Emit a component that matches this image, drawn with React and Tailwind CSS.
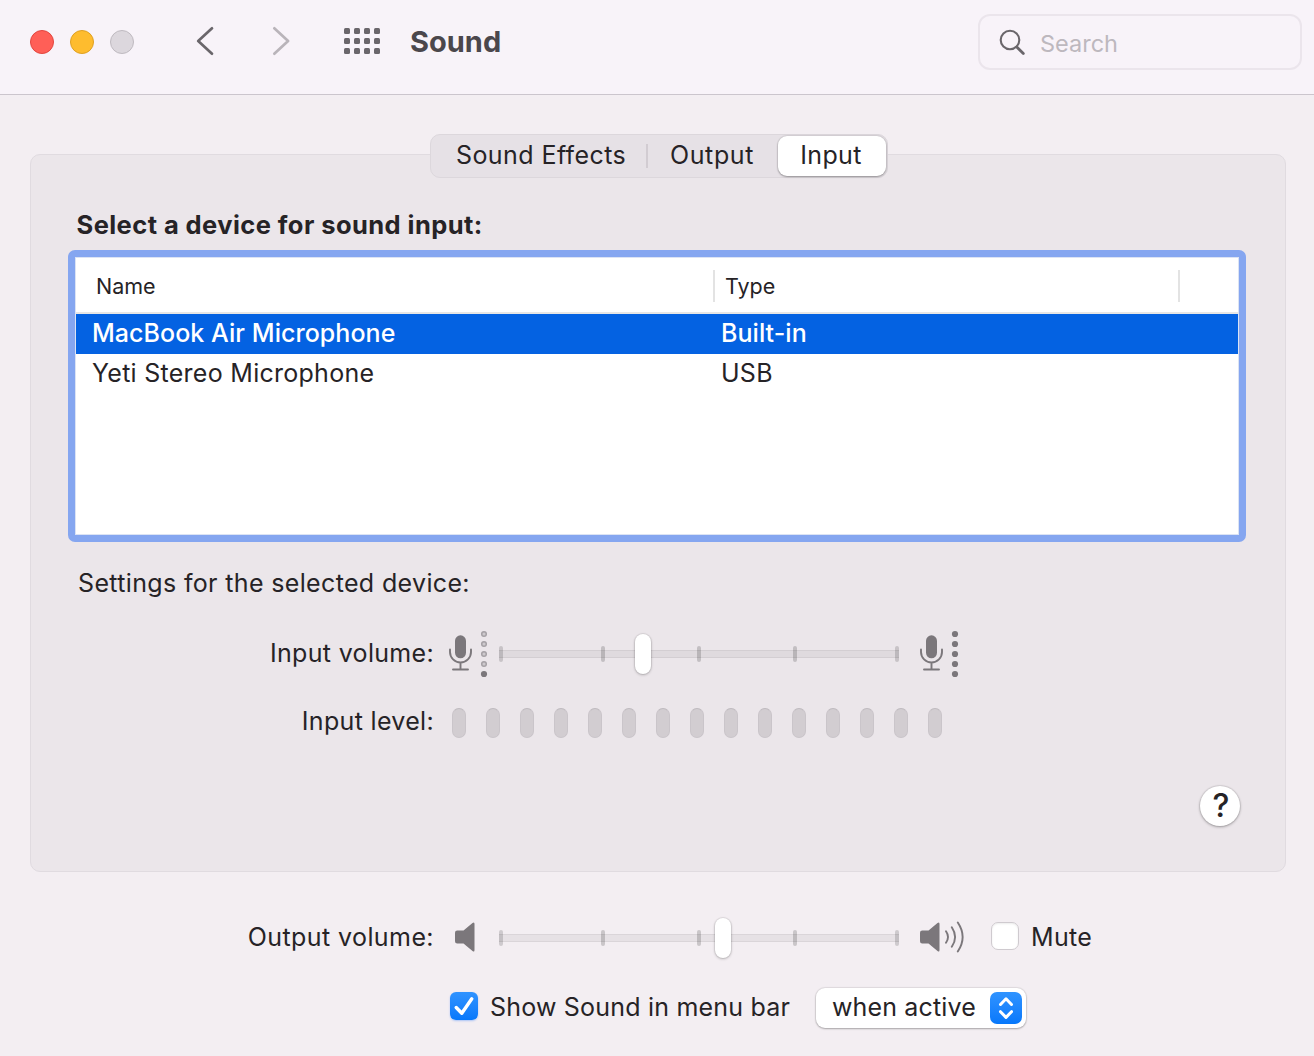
import React from "react";

const LABEL = "text-[25px] leading-[30px] whitespace-nowrap";

function Slider({ value }) {
  return (
    <div className="relative flex h-[42px] w-[400px] items-center">
      <div className="h-2 w-full border-y border-black/5 bg-black/5" />
      <div className="absolute inset-0 flex items-center">
        <span className="h-4 w-1 rounded-full bg-black/15" />
        <span className="ml-[98px] h-4 w-1 rounded-sm bg-black/17" />
        <span className="ml-[92px] h-4 w-1 rounded-sm bg-black/17" />
        <span className="ml-[92px] h-4 w-1 rounded-sm bg-black/17" />
        <span className="ml-[98px] h-4 w-1 rounded-full bg-black/15" />
      </div>
      <div
        className="absolute top-[1px] h-10 w-4 rounded-full bg-white shadow-[0_0_1px_1px_rgba(0,0,0,0.08),0_1px_3px_rgba(0,0,0,0.22)]"
        style={{ left: value }}
      />
    </div>
  );
}

function Mic({ full }) {
  return (
    <svg width="42" height="50" viewBox="0 0 42 50" fill="none">
      <rect x="6" y="6.3" width="11" height="23" rx="5.5" fill="#7b777b" />
      <path d="M1 20.5v2.5a10.5 10.5 0 0 0 21 0V20.5M11.5 33.5v7M4 40.5h15" stroke="#7b777b" strokeWidth="1.9" strokeLinecap="round" />
      {[5, 15, 25, 35, 45].map((y) =>
        full || y === 45 ? (
          <circle key={y} cx="35" cy={y} r="3.1" fill="#7b777b" />
        ) : (
          <circle key={y} cx="35" cy={y} r="2.3" fill="#cdc9cd" stroke="#a5a1a5" strokeWidth="1.5" />
        )
      )}
    </svg>
  );
}

function Speaker({ waves }) {
  return (
    <svg width="46" height="36" viewBox="0 0 46 36" fill="none">
      <path d="M2.2 11.5H8.5L17.5 4Q19.5 2.5 19.5 5V31Q19.5 33.5 17.5 32L8.5 24.5H2.2Q0 24.5 0 22.3V13.7Q0 11.5 2.2 11.5Z" fill="#7b777b" />
      {waves && (
        <path d="M26 12.3Q30 18 26 23.7M31.8 8.2Q38.4 18 31.8 27.8M37.8 3.5Q47.5 18 37.8 32.5" stroke="#7b777b" strokeWidth="1.9" strokeLinecap="round" />
      )}
    </svg>
  );
}

function Header() {
  return (
    <header className="flex h-[95px] border-b border-[#cbc5cd] bg-[#f8f3f9] pl-[30px] pr-3">
      <div className="mt-[30px] flex gap-4">
        <span className="size-6 rounded-full border border-[#e2463f] bg-[#ff5f57]" />
        <span className="size-6 rounded-full border border-[#dfa023] bg-[#febc2e]" />
        <span className="size-6 rounded-full border border-[#bfbac0] bg-[#dcd7dd]" />
      </div>
      <svg className="ml-[61px] mt-6" width="20" height="34" viewBox="0 0 20 34" fill="none">
        <path d="M17 4.3L3.2 17L17 29.7" stroke="#6a666b" strokeWidth="2.7" strokeLinecap="round" strokeLinejoin="round" />
      </svg>
      <svg className="ml-14 mt-6" width="20" height="34" viewBox="0 0 20 34" fill="none">
        <path d="M3.3 4.3L17.1 17L3.3 29.7" stroke="#b9b4ba" strokeWidth="2.7" strokeLinecap="round" strokeLinejoin="round" />
      </svg>
      <div className="ml-[53px] mt-7 grid h-[26px] w-9 grid-cols-[repeat(4,6px)] content-between justify-between">
        {Array.from({ length: 12 }, (_, i) => (
          <span key={i} className="size-1.5 rounded-[1.5px] bg-[#6a666b]" />
        ))}
      </div>
      <h1 className="ml-[30px] mt-6 text-[29px] font-bold leading-9 text-[#4b474c]">Sound</h1>
      <div className="ml-auto mt-[14px] flex h-14 w-[324px] items-center rounded-[12px] border-2 border-[#ebe5ec] pl-[18px]">
        <svg className="mt-0.5" width="30" height="30" viewBox="0 0 30 30" fill="none">
          <circle cx="12" cy="12" r="9.3" stroke="#6a666b" strokeWidth="2.1" />
          <path d="M18.8 19L25.3 25.5" stroke="#6a666b" strokeWidth="2.8" strokeLinecap="round" />
        </svg>
        <span className="ml-3 mt-1 text-[23.5px] leading-7 text-[#bdb8be]">Search</span>
      </div>
    </header>
  );
}

function Tabs() {
  return (
    <div className="-mt-[21px] ml-[399px] flex h-11 w-[458px] items-center rounded-[10px] border border-[#dcd7dc] bg-[#e6e1e6] text-[25px] leading-[30px]">
      <span className="-mt-0.5 ml-[25px] w-[190px] shrink-0 whitespace-nowrap tracking-[0.42px]">Sound Effects</span>
      <span className="h-6 w-0.5 bg-[#d2ccd2]" />
      <span className="-mt-0.5 ml-[22px] w-[108px] shrink-0 tracking-[0.6px]">Output</span>
      <span className="flex h-10 w-[108px] shrink-0 justify-center rounded-[9px] bg-white pr-0.5 pt-1 tracking-[0.35px] shadow-[0_0_1px_1px_rgba(0,0,0,0.08),0_1px_2px_rgba(0,0,0,0.3)]">Input</span>
    </div>
  );
}

function Table() {
  return (
    <div className="ml-[37px] mt-2.5 h-[292px] w-[1178px] rounded-[7px] border-[7px] border-[#85a6f0] bg-white">
      <div className="h-full border border-[#dbe3f4]">
        <div className="flex h-14 items-center border-b-2 border-[#e6e6e6] pt-0.5 text-[21.5px] leading-7">
          <span className="w-[637px] pl-5">Name</span>
          <span className="h-8 w-0.5 bg-[#e3e3e3]" />
          <span className="w-[463px] pl-2.5">Type</span>
          <span className="h-8 w-0.5 bg-[#e3e3e3]" />
        </div>
        <div className={`flex h-10 items-center bg-[#0462e2] pb-0.5 font-medium tracking-[0.05px] text-white ${LABEL}`}>
          <span className="w-[629px] pl-4">MacBook Air Microphone</span>
          <span className="pl-4">Built-in</span>
        </div>
        <div className={`flex h-10 items-center pb-0.5 tracking-[0.27px] ${LABEL}`}>
          <span className="w-[629px] pl-4">Yeti Stereo Microphone</span>
          <span className="pl-4">USB</span>
        </div>
      </div>
    </div>
  );
}

export default function App() {
  return (
    <div className="h-[1056px] w-[1314px] overflow-hidden bg-[#f3eef2] font-['Inter',sans-serif] text-[#262326]">
      <Header />
      <main className="pl-[30px] pr-7 pt-[59px]">
        <section className="h-[718px] rounded-[10px] border border-[#e0dbe0] bg-[#ebe6ea]">
          <Tabs />
          <h2 className="ml-[45.5px] mt-8 text-[25.5px] font-bold leading-[30px] tracking-[0.43px]">Select a device for sound input:</h2>
          <Table />
          <p className={`ml-[47px] mt-[26px] tracking-[0.35px] ${LABEL}`}>Settings for the selected device:</p>
          <div className="mt-[31px] flex h-[50px] items-center">
            <span className={`-mt-0.5 w-[403px] text-right tracking-[0.32px] ${LABEL}`}>Input volume:</span>
            <span className="ml-[15px]"><Mic /></span>
            <div className="ml-2"><Slider value={136} /></div>
            <span className="ml-[21px]"><Mic full /></span>
          </div>
          <div className="mt-[29px] flex h-[30px] items-center">
            <span className={`-mt-1 w-[403px] text-right tracking-[0.32px] ${LABEL}`}>Input level:</span>
            <div className="ml-[18px] flex gap-5">
              {Array.from({ length: 15 }, (_, i) => (
                <span key={i} className="h-[30px] w-3.5 rounded-full border border-[#cac5ca] border-t-[#bfbabf] bg-[#d2cdd1]" />
              ))}
            </div>
          </div>
          <div className="mr-[45px] mt-12 flex justify-end">
            <span className="flex size-10 items-center justify-center rounded-full bg-white pl-0.5 text-[32px] font-medium leading-none shadow-[0_0_1px_1px_rgba(0,0,0,0.08),0_1px_3px_rgba(0,0,0,0.3)]">?</span>
          </div>
        </section>
      </main>
      <div className="mt-[41px] flex h-[50px] items-center">
        <span className={`-mt-0.5 w-[434px] text-right tracking-[0.42px] ${LABEL}`}>Output volume:</span>
        <span className="-mt-0.5 ml-[21px] w-11"><Speaker /></span>
        <Slider value={216} />
        <span className="-mt-0.5 ml-[21px]"><Speaker waves /></span>
        <span className="-mt-1 ml-[25px] size-7 rounded-[7px] border border-[#cfcacf] bg-white shadow-[inset_0_1px_2px_rgba(0,0,0,0.08)]" />
        <span className={`-mt-0.5 ml-3 tracking-[0.3px] ${LABEL}`}>Mute</span>
      </div>
      <div className="mt-[25px] flex h-10 items-center pl-[450px]">
        <svg className="-mt-1 rounded-[6px] bg-linear-to-b from-[#2f93ff] to-[#0678fb] shadow-[0_1px_2px_rgba(0,100,255,0.3)]" width="28" height="28" viewBox="0 0 28 28" fill="none">
          <path d="M6.2 15.5L11.8 21.3L21.8 6.8" stroke="#fff" strokeWidth="3.4" strokeLinecap="round" strokeLinejoin="round" />
        </svg>
        <span className={`-mt-0.5 ml-3 w-[326px] tracking-[0.2px] ${LABEL}`}>Show Sound in menu bar</span>
        <span className="flex h-10 w-[210px] items-center justify-between rounded-[9px] bg-white pl-4 pr-1 shadow-[0_0_1px_1px_rgba(0,0,0,0.08),0_1px_2px_rgba(0,0,0,0.25)]">
          <span className={`-mt-0.5 tracking-[0.15px] ${LABEL}`}>when active</span>
          <svg className="rounded-[7px] bg-linear-to-b from-[#2f93ff] to-[#0678fb]" width="32" height="32" viewBox="0 0 32 32" fill="none">
            <path d="M10.5 12.5L16 6.8L21.5 12.5M10.5 19.7L16 25.4L21.5 19.7" stroke="#fff" strokeWidth="3" strokeLinecap="round" strokeLinejoin="round" />
          </svg>
        </span>
      </div>
    </div>
  );
}
